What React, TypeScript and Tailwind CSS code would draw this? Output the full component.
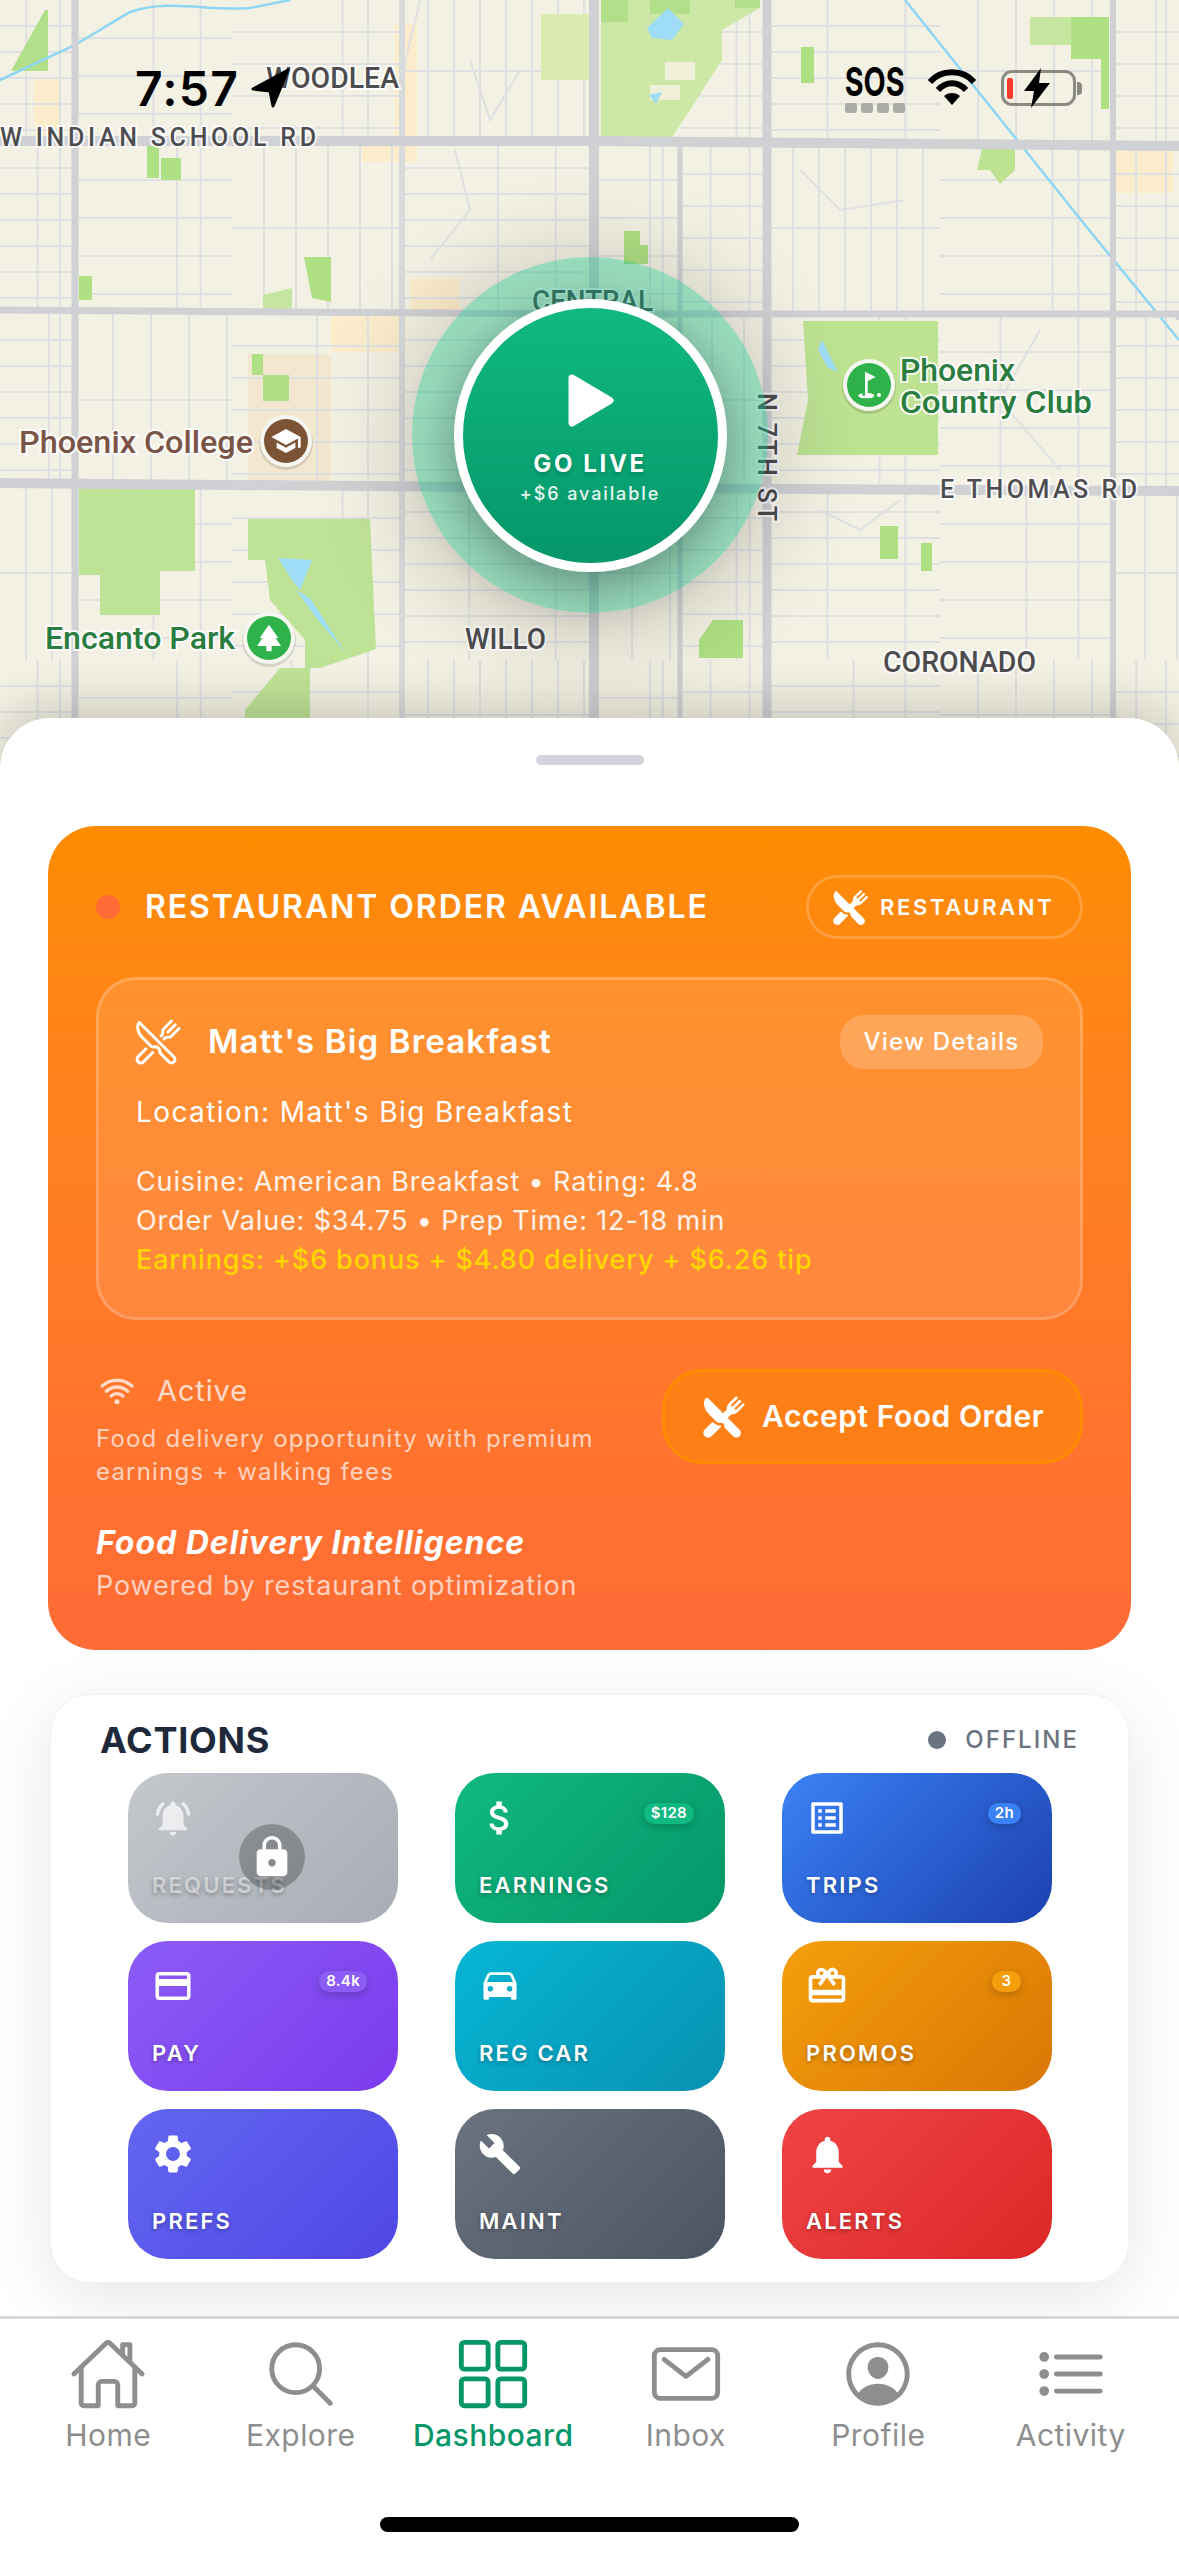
import type { ReactNode } from 'react'
import {
  IoRestaurant,
  IoRestaurantOutline,
  IoWifi,
  IoCar,
  IoHomeOutline,
  IoSearchOutline,
  IoGridOutline,
  IoMailOutline,
  IoPersonCircleOutline,
  IoListOutline,
} from 'react-icons/io5'
import {
  MdNotificationsActive,
  MdAttachMoney,
  MdListAlt,
  MdCreditCard,
  MdCardGiftcard,
  MdSettings,
  MdBuild,
  MdNotifications,
  MdLock,
  MdSchool,
  MdGolfCourse,
  MdPark,
} from 'react-icons/md'

const cols = [0, 75, 232, 402, 594, 680, 767, 940, 1113, 1179]
const rows = [0, 142, 314, 486, 660, 770]

// residential streets, hatched block by block
function buildStreets() {
  let d = ''
  for (let r = 0; r < rows.length - 1; r++) {
    for (let c = 0; c < cols.length - 1; c++) {
      const [x0, x1] = [cols[c], cols[c + 1]]
      const [y0, y1] = [rows[r], rows[r + 1]]
      const step = [26, 32, 38][(r * 3 + c * 5) % 3]
      if ((r + c) % 4 === 3) {
        for (let x = x0 + step; x < x1; x += step) d += `M${x} ${y0}V${y1}`
        d += `M${x0} ${(y0 + y1) / 2}H${x1}`
      } else {
        for (let y = y0 + step; y < y1; y += step) d += `M${x0} ${y}H${x1}`
        const mid = x0 + (x1 - x0) * (0.35 + ((r + c) % 3) * 0.15)
        d += `M${mid} ${y0}V${y1}M${x0 + (x1 - x0) * 0.8} ${y0}V${y1}`
      }
    }
  }
  return d
}

const streets = buildStreets()

const sand: [number, number, number, number, string][] = [
  [34, 78, 26, 62, '#fbeccb'],
  [395, 24, 22, 125, '#fbeccb'],
  [362, 146, 55, 16, '#fbeccb'],
  [1116, 151, 57, 42, '#fbeccb'],
  [410, 278, 49, 33, '#fbeccb'],
  [331, 316, 75, 36, '#fbeccb'],
  [248, 354, 83, 127, '#f3e7cf'],
]

// park shapes, traced roughly from the map
const parks: [string, string][] = [
  ['M541 14H590V80H541Z', '#dcebb0'],
  ['M601 0H760V8L722 30V60L690 110L672 137H601Z', '#cde8a6'],
  ['M601 0H628V22H601ZM650 0H690V14H650ZM735 0H760V8H735Z', '#b2e08a'],
  ['M665 62H695V80H665ZM650 85H680V100H650Z', '#f0f0d8'],
  ['M11 71L45 10H48V71Z', '#b2e08a'],
  ['M147 146H159V178H147ZM161 158H181V180H161Z', '#afe084'],
  ['M304 257H331V302L312 298Z', '#afe084'],
  ['M263 295L292 288V309H263Z', '#c7e5a2'],
  ['M79 276H92V300H79Z', '#afe084'],
  ['M801 47H814V83H801Z', '#afe084'],
  ['M1030 17H1109V59H1071V45H1030Z', '#c7e7a0'],
  ['M1071 17H1109V59H1071ZM1101 59H1109V109H1101Z', '#afe084'],
  ['M982 149H1015V170L1000 184L990 170H977Z', '#bde292'],
  ['M880 526H898V559H880ZM921 543H932V571H921Z', '#afe084'],
  ['M713 620H743V658H699V640Z', '#afe084'],
  ['M624 231H640V245H648V264H624Z', '#afe084'],
  ['M263 375H289V401H263ZM252 354H263V375H252Z', '#afe084'],
  ['M803 321H938V455H797L808 400Z', '#bde292'],
  ['M79 488H195V571H160V615H100V575H79Z', '#bfe396'],
  ['M248 519H370L376 649L320 668H305V640L270 600L265 560L248 560Z', '#bfe396'],
  ['M280 668H310V770H245V710Z', '#bfe396'],
]

function MapLabel({ x, y, w, size, fill = '#4d4d4f', rotate, spaced, children }: { x: number; y: number; w: number; size: number; fill?: string; rotate?: number; spaced?: boolean; children: ReactNode }) {
  return (
    <text
      x={x}
      y={y}
      fontSize={size}
      fontFamily="Roboto, sans-serif"
      fontWeight={500}
      fill={fill}
      stroke="#ffffff"
      strokeOpacity={0.85}
      strokeWidth={4}
      paintOrder="stroke"
      textLength={w}
      lengthAdjust={spaced ? 'spacing' : 'spacingAndGlyphs'}
      transform={rotate ? `rotate(${rotate} ${x} ${y})` : undefined}
    >
      {children}
    </text>
  )
}

function MapPin({ cx, cy, r, from, children }: { cx: number; cy: number; r: number; from: string; children: ReactNode }) {
  return (
    <g>
      <circle cx={cx} cy={cy + 2} r={r + 5} fill="#000000" opacity={0.12} />
      <circle cx={cx} cy={cy} r={r + 4} fill="#f7f7f2" />
      <circle cx={cx} cy={cy} r={r} fill={from} />
      {children}
    </g>
  )
}

function MapLayer() {
  return (
    <svg viewBox="0 0 1179 770" className="absolute inset-0 w-[1179px] h-[770px]">
      <rect width="1179" height="770" fill="#f3f1e3" />
      {sand.map(([x, y, w, h, c], i) => (
        <rect key={i} x={x} y={y} width={w} height={h} fill={c} />
      ))}
      <path d={streets} stroke="#dfe0e2" strokeWidth={2} fill="none" />
      <path d="M420 0C412 40 398 60 404 140M455 150L470 210L430 260M470 60L490 120L520 70M800 170L840 210L905 200M1040 330L1000 400L1060 470M820 510L860 530L900 500" stroke="#dfe0e2" strokeWidth={2} fill="none" />
      {parks.map(([d, c], i) => (
        <path key={i} d={d} fill={c} />
      ))}
      <path d="M647 28L668 8L684 24L672 40L652 38Z" fill="#9fdcf5" />
      <path d="M278 558L312 560L300 590L292 580Z M296 590L310 598L345 652L318 620Z" fill="#9fdcf5" />
      <path d="M822 340L838 372L828 368L818 350Z" fill="#9fdcf5" />
      <path d="M649 95L662 92L656 104Z" fill="#9fdcf5" />
      <path d="M0 80L75 45L130 12C170 -2 210 12 250 8L290 0M905 0L1085 225L1179 340" stroke="#8ed6f2" strokeWidth={2.5} fill="none" />
      <g stroke="#d0d1d5" fill="none">
        <path d="M75 0V770" strokeWidth={7} />
        <path d="M402 0V770" strokeWidth={6} stroke="#d9dadc" />
        <path d="M594 0V770" strokeWidth={10} />
        <path d="M680 140V770" strokeWidth={5} />
        <path d="M767 0V770" strokeWidth={9} />
        <path d="M1113 0V770" strokeWidth={6} />
        <path d="M0 141H600L1179 146" strokeWidth={10} />
        <path d="M0 310L600 314H1179L1179 320" strokeWidth={7} />
        <path d="M0 483L600 488L1179 491" strokeWidth={10} />
      </g>

      <MapLabel x={266} y={88} w={133} size={29}>WOODLEA</MapLabel>
      <MapLabel x={0} y={146} w={316} size={25} spaced>W INDIAN SCHOOL RD</MapLabel>
      <MapLabel x={532} y={311} w={121} size={29}>CENTRAL</MapLabel>
      <MapLabel x={940} y={498} w={197} size={25} spaced>E THOMAS RD</MapLabel>
      <MapLabel x={758} y={393} w={128} size={25} rotate={90} spaced>N 7TH ST</MapLabel>
      <MapLabel x={465} y={649} w={81} size={29}>WILLO</MapLabel>
      <MapLabel x={883} y={672} w={153} size={29}>CORONADO</MapLabel>
      <MapLabel x={19} y={453} w={234} size={31} fill="#7a5547">Phoenix College</MapLabel>
      <MapLabel x={900} y={381} w={115} size={31} fill="#2a7d3f">Phoenix</MapLabel>
      <MapLabel x={900} y={413} w={192} size={31} fill="#2a7d3f">Country Club</MapLabel>
      <MapLabel x={45} y={649} w={190} size={31} fill="#2a7d3f">Encanto Park</MapLabel>

      <MapPin cx={286} cy={441} r={22} from="#7d5336">
        <MdSchool x={270} y={425} size={32} color="#ffffff" />
      </MapPin>
      <MapPin cx={869} cy={385} r={22} from="#2fb24a">
        <MdGolfCourse x={853} y={369} size={32} color="#ffffff" />
      </MapPin>
      <MapPin cx={269} cy={638} r={22} from="#2fb24a">
        <MdPark x={253} y={622} size={32} color="#ffffff" />
      </MapPin>
    </svg>
  )
}

function StatusBar() {
  return (
    <div className="absolute inset-x-0 top-[60px] flex items-start justify-between pl-[135px] pr-[97px] text-black">
      <div className="flex items-center gap-[12px]">
        <span className="text-[48px] leading-[58px] font-semibold tracking-[0.025em]">7:57</span>
        <svg width="40" height="40" viewBox="0 0 40 40" fill="#000000" className="mt-[-2px]">
          <path d="M37 2L2 21L19 23L22 38Z" stroke="#000000" strokeWidth={3} strokeLinejoin="round" />
        </svg>
      </div>
      <div className="flex items-start pt-[8px]">
        <div className="flex flex-col items-center w-[60px]">
          <span className="text-[40px] leading-[27px] font-bold scale-x-[0.72]">SOS</span>
          <div className="flex gap-[4px] mt-[8px]">
            {[0, 1, 2, 3].map(i => (
              <span key={i} className="w-[12px] h-[10px] rounded-[3px] bg-[#aaaaa6]" />
            ))}
          </div>
        </div>
        <svg width="50" height="38" viewBox="0 0 50 38" className="ml-[22px]" fill="none" stroke="#000000" strokeWidth={6}>
          <path d="M3 14C14 1 36 1 47 14" />
          <path d="M11 22C19 13 31 13 39 22" />
          <path d="M25 37L17 28C21 24 29 24 33 28Z" fill="#000000" stroke="none" />
        </svg>
        <div className="ml-[24px] relative flex items-center">
          <div className="w-[75px] h-[36px] mt-[2px] rounded-[11px] border-[3px] border-[#8a8a82] flex items-center pl-[3px]">
            <span className="w-[6px] h-[21px] rounded-[2px] bg-[#ff3b30]" />
          </div>
          <span className="w-[5px] h-[13px] mt-[2px] ml-[1px] rounded-r-[4px] bg-[#8a8a82]" />
          <svg width="26" height="40" viewBox="0 0 26 40" className="absolute left-[23px] top-0" fill="#000000">
            <path d="M17 0L0 23H10L7 40L26 15H15Z" />
          </svg>
        </div>
      </div>
    </div>
  )
}

function GoLive() {
  return (
    <div className="absolute left-[412px] top-[257px] w-[356px] h-[356px] rounded-full bg-[#10b981]/40 flex items-center justify-center shadow-[0_10px_100px_rgba(0,0,0,0.22)]">
      <div className="w-[273px] h-[273px] rounded-full border-[9px] border-white bg-linear-to-b from-[#10b981] to-[#059669] flex flex-col items-center pt-[66px] shadow-[0_14px_50px_rgba(0,0,0,0.35)]">
        <svg width="46" height="53" viewBox="0 0 46 53" fill="#ffffff" className="ml-[2px]">
          <path d="M4 4L42 26.5L4 49Z" stroke="#ffffff" strokeWidth={7} strokeLinejoin="round" />
        </svg>
        <span className="mt-[22px] text-[24px] leading-[30px] font-bold tracking-[0.11em] text-white [text-shadow:0_2px_4px_rgba(0,0,0,0.2)]">GO LIVE</span>
        <span className="mt-[3px] text-[18px] leading-[24px] font-medium tracking-[0.105em] text-white/90">+$6 available</span>
      </div>
    </div>
  )
}

function OrderCard() {
  return (
    <div className="rounded-[48px] bg-linear-to-b from-[#ff8c00] to-[#ff6b35] pt-[49px] px-[48px] h-[824px] text-white">
      <div className="flex items-center justify-between h-[64px]">
        <div className="flex items-center gap-[25px]">
          <span className="w-[24px] h-[24px] rounded-full bg-[#ff6b35]" />
          <span className="text-[32px] font-semibold tracking-[0.06em]">RESTAURANT ORDER AVAILABLE</span>
        </div>
        <div className="w-[277px] h-[64px] rounded-full border-[3px] border-white/20 flex items-center gap-[11px] pl-[23px]">
          <IoRestaurant size={37} />
          <span className="text-[22px] font-semibold tracking-[0.12em]">RESTAURANT</span>
        </div>
      </div>

      <div className="mt-[38px] h-[343px] rounded-[40px] border-[3px] border-white/20 bg-white/10 px-[37px] pt-[35px]">
        <div className="flex items-center justify-between">
          <div className="flex items-center gap-[26px]">
            <IoRestaurantOutline size={48} className="-ml-[2px]" />
            <span className="text-[33px] font-semibold tracking-[0.035em]">Matt's Big Breakfast</span>
          </div>
          <span className="w-[203px] h-[54px] rounded-[24px] bg-white/20 flex items-center justify-center text-[24px] font-medium tracking-[0.05em]">View Details</span>
        </div>
        <p className="mt-[23px] text-[28px] leading-[40px] tracking-[0.05em]">Location: Matt's Big Breakfast</p>
        <div className="mt-[30px] text-[27px] leading-[39px] tracking-[0.032em]">
          <p className="text-white/90">Cuisine: American Breakfast • Rating: 4.8</p>
          <p className="text-white/90">Order Value: $34.75 • Prep Time: 12-18 min</p>
          <p className="text-[#ffd700] font-medium">Earnings: +$6 bonus + $4.80 delivery + $6.26 tip</p>
        </div>
      </div>

      <div className="mt-[49px] flex justify-between">
        <div>
          <div className="flex items-center gap-[20px] h-[44px]">
            <IoWifi size={40} className="text-white/75 ml-[1px]" />
            <span className="text-[29px] tracking-[0.03em] text-white/75">Active</span>
          </div>
          <p className="mt-[9px] w-[540px] text-[24px] leading-[33px] tracking-[0.05em] text-white/70">
            Food delivery opportunity with premium earnings + walking fees
          </p>
        </div>
        <div className="w-[421px] h-[95px] rounded-[40px] border-[3px] border-[#ff8c00] bg-[#ff7f17] flex items-center gap-[16px] pl-[37px] shrink-0">
          <IoRestaurant size={44} />
          <span className="text-[30px] font-semibold tracking-[0.018em]">Accept Food Order</span>
        </div>
      </div>

      <p className="mt-[35px] text-[32px] leading-[40px] font-bold italic tracking-[0.03em]">Food Delivery Intelligence</p>
      <p className="mt-[5px] text-[27px] leading-[36px] tracking-[0.032em] text-white/70">Powered by restaurant optimization</p>
    </div>
  )
}

const tiles = [
  { label: 'REQUESTS', icon: MdNotificationsActive, size: 42, bg: 'from-[#c4c7cc] to-[#a8adb5]', locked: true },
  { label: 'EARNINGS', icon: MdAttachMoney, size: 44, bg: 'from-[#10b981] to-[#059669]', badge: '$128', badgeBg: 'bg-[#10b981]' },
  { label: 'TRIPS', icon: MdListAlt, size: 42, bg: 'from-[#3b82f6] to-[#1e40af]', badge: '2h', badgeBg: 'bg-[#3b82f6]' },
  { label: 'PAY', icon: MdCreditCard, size: 42, bg: 'from-[#8b5cf6] to-[#7c3aed]', badge: '8.4k', badgeBg: 'bg-[#8b5cf6]' },
  { label: 'REG CAR', icon: IoCar, size: 44, bg: 'from-[#06b6d4] to-[#0891b2]' },
  { label: 'PROMOS', icon: MdCardGiftcard, size: 44, bg: 'from-[#f59e0b] to-[#d97706]', badge: '3', badgeBg: 'bg-[#f59e0b]' },
  { label: 'PREFS', icon: MdSettings, size: 46, bg: 'from-[#6366f1] to-[#4f46e5]' },
  { label: 'MAINT', icon: MdBuild, size: 44, bg: 'from-[#6b7280] to-[#4b5563]' },
  { label: 'ALERTS', icon: MdNotifications, size: 45, bg: 'from-[#ef4444] to-[#dc2626]' },
]

function ActionsCard() {
  return (
    <div className="mt-[44px] mx-[2px] h-[589px] rounded-[40px] bg-white border border-[#f2f2f2] shadow-[0_16px_70px_rgba(0,0,0,0.1)] pl-[77px] pr-[76px]">
      <div className="flex items-center justify-between -ml-[28px] -mr-[27px] h-[78px] pt-[12px]">
        <span className="text-[36px] font-bold tracking-[0.02em] text-[#1e293b]">ACTIONS</span>
        <div className="flex items-center gap-[19px]">
          <span className="w-[18px] h-[18px] rounded-full bg-[#6b7280]" />
          <span className="text-[24px] font-medium tracking-[0.085em] text-[#6b7280]">OFFLINE</span>
        </div>
      </div>
      <div className="grid grid-cols-3 gap-x-[57px] gap-y-[18px]">
        {tiles.map(t => (
          <div key={t.label} className={`relative h-[150px] rounded-[40px] bg-linear-135 ${t.bg} flex flex-col justify-between pt-[24px] pb-[25px] pl-[24px]`}>
            <div className={`w-[42px] h-[42px] flex items-center justify-center ${t.locked ? 'text-white/70' : 'text-white'}`}>
              <t.icon size={t.size} className="shrink-0" />
            </div>
            <span className={`text-[22px] leading-[26px] font-semibold tracking-[0.1em] [text-shadow:0_2px_4px_rgba(0,0,0,0.3)] ${t.locked ? 'text-white/50' : 'text-white'}`}>{t.label}</span>
            {t.badge && (
              <span className={`absolute top-[30px] right-[31px] h-[21px] min-w-[29px] px-[7px] rounded-full ${t.badgeBg} flex items-center justify-center text-[15px] font-semibold tracking-[0.02em] text-white shadow-[0_3px_8px_rgba(0,0,0,0.2)]`}>
                {t.badge}
              </span>
            )}
            {t.locked && (
              <div className="absolute left-[111px] top-[51px] w-[66px] h-[66px] rounded-full bg-black/25 flex items-center justify-center">
                <MdLock size={46} className="text-white" />
              </div>
            )}
          </div>
        ))}
      </div>
    </div>
  )
}

const tabs = [
  { label: 'Home', icon: IoHomeOutline },
  { label: 'Explore', icon: IoSearchOutline },
  { label: 'Dashboard', icon: IoGridOutline, active: true },
  { label: 'Inbox', icon: IoMailOutline },
  { label: 'Profile', icon: IoPersonCircleOutline },
  { label: 'Activity', icon: IoListOutline },
]

function TabBar() {
  return (
    <div className="relative z-20 h-[240px] bg-white border-t-[3px] border-[#d9d9d9]">
      <div className="grid grid-cols-6 px-[12px] pt-[16px]">
        {tabs.map(t => (
          <div key={t.label} className={`flex flex-col items-center ${t.active ? 'text-[#059669]' : 'text-[#8e8e8e]'}`}>
            <t.icon size={78} />
            <span className={`mt-[4px] text-[30px] leading-[36px] tracking-[0.015em] ${t.active ? 'font-medium' : ''}`}>{t.label}</span>
          </div>
        ))}
      </div>
      <div className="absolute left-[380px] top-[198px] w-[419px] h-[15px] rounded-full bg-black" />
    </div>
  )
}

export default function App() {
  return (
    <div className="w-[1179px] h-[2556px] overflow-hidden bg-white flex flex-col font-['Inter',sans-serif]">
      <div className="relative h-[768px] shrink-0 overflow-hidden">
        <MapLayer />
        <StatusBar />
        <GoLive />
      </div>
      <div className="relative z-10 -mt-[50px] h-[1598px] shrink-0 rounded-t-[50px] bg-white px-[48px] shadow-[0_-10px_50px_rgba(0,0,0,0.18)]">
        <div className="mx-auto mt-[37px] w-[108px] h-[10px] rounded-full bg-[#d1d5db]" />
        <div className="mt-[61px]">
          <OrderCard />
          <ActionsCard />
        </div>
      </div>
      <TabBar />
    </div>
  )
}
